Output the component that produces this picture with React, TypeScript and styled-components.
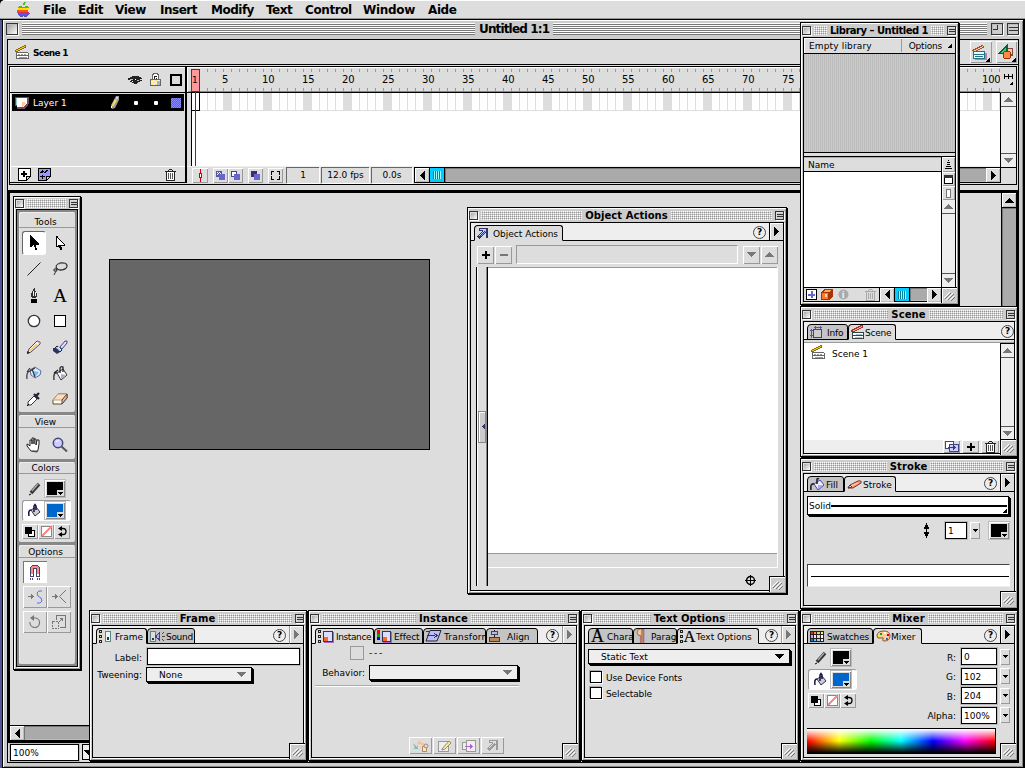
import React from 'react';

import styled, { createGlobalStyle, css } from 'styled-components';

const GlobalStyle = createGlobalStyle`
  * { box-sizing: border-box; }
  body {
    margin: 0;
    overflow: hidden;
    background: #000;
    color: #000;
    font: 9px/12px 'DejaVu Sans', Verdana, sans-serif;
  }
  svg { display: block; flex: none; overflow: visible; shape-rendering: crispEdges; }
`;

const raised = css`
  background: #ddd;
  box-shadow: inset 1px 1px 0 #fff, inset -1px -1px 0 #999;
`;

type TextProps = { $ls?: number; $w?: number; $top?: number; $right?: boolean; $bold?: boolean; $white?: boolean };

const Text = styled.span<TextProps>`
  display: block;
  flex: none;
  padding-top: ${p => p.$top ?? 2}px;
  line-height: 10px;
  white-space: pre;
  letter-spacing: ${p => p.$ls ?? 0}px;
  width: ${p => (p.$w ? `${p.$w}px` : 'auto')};
  text-align: ${p => (p.$right ? 'right' : 'left')};
  font-weight: ${p => (p.$bold ? 'bold' : 'normal')};
  color: ${p => (p.$white ? '#fff' : '#000')};
`;

const Spacer = styled.div<{ $w?: number; $h?: number }>`
  flex: ${p => (p.$w || p.$h ? 'none' : '1')};
  width: ${p => (p.$w ? `${p.$w}px` : 'auto')};
  height: ${p => (p.$h ? `${p.$h}px` : 'auto')};
`;

const Row = styled.div<{ $gap?: number; $pad?: string; $h?: number }>`
  display: flex;
  flex: none;
  align-items: center;
  gap: ${p => p.$gap ?? 0}px;
  padding: ${p => p.$pad ?? '0'};
  height: ${p => (p.$h ? `${p.$h}px` : 'auto')};
`;

/* ---------- icons ---------- */

const icons: Record<string, [number, number, React.ReactNode]> = {
  clapper: [14, 15, (
    <>
      <path d="M1 8h12v6H2z" fill="#fff" />
      <path d="M1 7.5h12M1 10.5h12M2 13.5h12M1.5 7v7M13.5 8v6" stroke="#666" />
      <path d="M3 9h2M6 9h2M9 9h2M4 12h8" stroke="#999" />
      <path d="M0 5h1V4h2V3h2V2h2V1h2V0h2v3H9v1H7v1H5v1H3v1H0z" fill="#876a20" />
      <path d="M1 5h2V4h2V3h2V2h2V1h1v1H9v1H7v1H5v1H3v1H1z" fill="#fc0" />
    </>
  )],
  clapperRed: [13, 14, (
    <>
      <path d="M0 5h1V4h2V3h2V2h2V1h2V0h3v3h-2v1H8v1H6v1H4v1H0z" fill="#a33" />
      <path d="M2 5h2V4h2V3h2V2h2V1h1v1h-1v1H8v1H6v1H4v1H2z" fill="#fa8" />
      <path d="M1 8h12v6H1z" fill="#fff" />
      <path d="M1 7.5h12M1 10.5h12M1 13.5h12M1.5 7v7M12.5 7v7" stroke="#344" />
      <path d="M5 9h6M4 12h7" stroke="#9cc" />
    </>
  )],
  clapperBlue: [16, 16, (
    <>
      <path d="M0 6h1V5h2V4h2V3h2V2h2V1h2v1h1v2h-2v1H8v1H6v1H4v1H1z" fill="#a64a50" />
      <path d="M2 6h2V5h2V4h2V3h2V2h1v1h-1v1H8v1H6v1H4v1H2z" fill="#fd6" />
      <path d="M3 9h12v7H3z" fill="#a5a" opacity=".7" />
      <path d="M2 8h11v6H2z" fill="#dff" />
      <path d="M1 7.5h12M1 10.5h12M1 14.5h12M1.5 8v6M12.500 8v6" stroke="#267388" />
      <path d="M3 12.500h8" stroke="#267388" />
    </>
  )],
  symbols: [16, 16, (
    <>
      <path d="M9 4h6v8H9z" fill="#844" />
      <path d="M10 5h4v5h-4z" fill="#fc9" />
      <path d="M0 9h1V8h1V7h1V6h1V5h1V4h1V3h1V2h1V1h1V0h1v10H0z" fill="#063" />
      <path d="M3 8h1V7h1V6h1V5h1V4h1v5H3z" fill="#3c7" />
      <circle cx="9" cy="11" r="4.5" fill="#930" />
      <circle cx="9" cy="11" r="3.5" fill="#f84" />
    </>
  )],
  eye: [14, 10, (
    <>
      <path d="M0 3h2V2h2V1h7v1h2v1h1v1h-2v1h2v1h-2v1h-2v1H9v1H6V8H4V7H2V6h1V5H0z" fill="#222" />
      <path d="M2 4h3v1H2zM9 5h2v1H9z" fill="#bbb" />
      <path d="M4 6h1v1H4zM7 4h1v1H7z" fill="#fff" />
    </>
  )],
  lock: [11, 13, (
    <>
      <path d="M2 1h1V0h5v1h1v5h2v7H0V6h2z" fill="#666" />
      <path d="M3 2h1V1h3v1h1v4H3z" fill="#fff" />
      <path d="M4 3h3v1H5v2H4zM6 5h1v1H6z" fill="#222" />
      <path d="M1 7h9v5H1z" fill="#eee" />
      <path d="M1 7h2v1H1zm4 0h2v1H5zM3 9h2v1H3zM1 11h2v1H1zm4 0h2v1H5z" fill="#fd6" />
      <path d="M7 8h3v4H7z" fill="#aad" />
    </>
  )],
  layer: [14, 12, (
    <>
      <path d="M0 0h14v7h-1v2h-1v1h-1v1h-1v1H2V9H0z" fill="#746" />
      <path d="M1 1h11v6l-4 3H2V8H1z" fill="#fff" />
      <path d="M7 10V5l5 1z" fill="#fc9" />
      <path d="M1 1h1v7H1z" fill="#9cc" />
    </>
  )],
  layerPencil: [10, 13, (
    <g shapeRendering="auto">
      <path d="M6 0h3v4L5 12l-3 1-1-4z" fill="#999" />
      <path d="M5 3l2 1-4 7-1-2z" fill="#fd5" />
      <path d="M6 1h2v2H6z" fill="#ccf" />
      <path d="M1 10h1v2H1z" fill="#fff" />
    </g>
  )],
  addLayer: [13, 13, (
    <>
      <path d="M1 1h11v8H9v3H1z" fill="#fff" />
      <path d="M0 0h13v9h-1v1h-1v1h-1v1H9v1H0zM1 1v11h7V8h4V1zM9 9v2h1v-1h1V9z" fillRule="evenodd" />
      <path d="M5 3h2v2h2v2H7v2H5V7H3V5h2z" />
    </>
  )],
  addGuide: [13, 13, (
    <>
      <path d="M1 1h11v8H9v3H1z" fill="#99f" />
      <path d="M0 0h13v9h-1v1h-1v1h-1v1H9v1H0zM1 1v11h7V8h4V1zM9 9v2h1v-1h1V9z" fillRule="evenodd" />
      <path d="M2 4h1V3h1V2h1v1h1v1h1V3h1V2h2v1H9v1H8v1H6V4H5v1H2zM4 7h1v1h2v1H5v2H4V9H2V8h2z" />
    </>
  )],
  trash: [11, 12, (
    <>
      <path d="M2 3h7v8H2z" fill="#fff" />
      <path d="M4 0h3v1h1v1h3v1h-1v9H1V3H0V2h3V1h1zM4 1v1h3V1zM2 3v8h7V3z" fillRule="evenodd" fill="#222" />
      <path d="M3 4h1v6H3zm2 0h1v6H5zm2 0h1v6H7z" fill="#555" />
    </>
  )],
  trashGray: [11, 12, (
    <>
      <path d="M4 0h3v1h1v1h3v1h-1v9H1V3H0V2h3V1h1zM4 1v1h3V1zM2 3v8h7V3z" fillRule="evenodd" fill="#aaa" />
      <path d="M3 4h1v6H3zm2 0h1v6H5zm2 0h1v6H7z" fill="#aaa" />
    </>
  )],
  playhead: [5, 13, (
    <>
      <path d="M2 0h1v4h1v5H3v4H2V9H1V4h1z" fill="#c00" />
      <path d="M2 5h1v3H2z" fill="#fff" />
    </>
  )],
  onion: [9, 9, (
    <>
      <path d="M0 0h6v6H0z" fill="#559" />
      <path d="M1 1h1v1H1zm2 0h1v1H3zM2 2h1v1H2zm2 0h1v1H4zM1 3h1v1H1zm2 0h1v1H3z" fill="#fff" />
      <path d="M3 3h6v6H3z" fill="#66c" />
    </>
  )],
  onionLines: [9, 9, (
    <>
      <path d="M0 0h6v6H0z" fill="#448" />
      <path d="M1 1h4v4H1z" fill="#fff" />
      <path d="M3 3h6v6H3z" fill="#66c" />
    </>
  )],
  onionMulti: [9, 9, (
    <>
      <path d="M0 0h6v6H0z" fill="#336" />
      <path d="M3 3h6v6H3z" fill="#66c" />
    </>
  )],
  markers: [9, 9, <path d="M0 0h3v1H1v2H0zM6 0h3v3H8V1H6zM0 6h1v2h2v1H0zM8 6h1v3H6V8h2zM0 3h1v1H0zM8 3h1v1H8zM0 5h1v1H0zM8 5h1v1H8z" />],
  frameView: [9, 13, <path d="M0 0h1v2h3V0h1v2h3V0h1v5H8V3H5v2H4V3H1v2H0zM9 8v3H6v-1h1V9h1V8z" />],
  arrow: [10, 16, <path d="M1 0v12h2v-1h1v-1h1v2h1v3h2v-2H7v-3h3V8H9V7H8V6H7V5H6V4H5V3H4V2H3V1H2V0z" />],
  subselect: [9, 14, (
    <path d="M.5.5v10h2v-1h1v2h1v2h1v-2h-1v-2h4v-1l-7-7v-1z" fill="#fff" stroke="#000" />
  )],
  line: [14, 14, <path d="M13.500.5L.5 13.500" stroke="#222" shapeRendering="auto" />],
  lasso: [15, 14, (
    <g shapeRendering="auto" fill="none" stroke="#333">
      <ellipse cx="8.500" cy="4.500" rx="5.500" ry="3.500" transform="rotate(-10 8 4)" strokeWidth="1.300" />
      <path d="M3 6l1 3H1V7h4M3 9l-2 4" />
      <path d="M6 2q3-2 6-.5" stroke="#66a" />
    </g>
  )],
  pen: [8, 15, (
    <>
      <path d="M4 0h1v3h1v2h1v4H6v1H2V9H1V5h1V3h1V1h1z" fill="#333" />
      <path d="M3 3h1v5H3zM5 4h1v4H5z" fill="#eee" />
      <path d="M4 1h1v1H4z" fill="#60c" />
      <path d="M1 11h6v4H1z" fill="#000" />
    </>
  )],
  letterA: [16, 14, <text x="1" y="13.500" fontFamily="Liberation Serif, serif" fontSize="19.500">A</text>],
  oval: [14, 14, <circle cx="7" cy="7" r="5.700" fill="#fff" stroke="#334" strokeWidth="1.300" shapeRendering="auto" />],
  rect: [12, 12, <path d="M.5.5h11v11H.5z" fill="#fff" stroke="#000" />],
  pencil: [14, 14, (
    <g shapeRendering="auto">
      <path d="M1 13l1-4L10 1l3 1v2L4 12z" fill="#fff" stroke="#446" />
      <path d="M3 11l7-7" stroke="#fc6" strokeWidth="2" />
      <path d="M10 1l3 1v2l-2-1z" fill="#d99" />
      <path d="M0 14v-3l3 2z" fill="#222" />
    </g>
  )],
  brush: [15, 14, (
    <g shapeRendering="auto">
      <path d="M7 7l5-6h2v2L9 9z" fill="#ddf" stroke="#447" />
      <path d="M4 6l5 4-2 2-5-4z" fill="#9cf" stroke="#224" />
      <path d="M0 8h3l4 4-3 2-4-3z" fill="#335" />
      <path d="M5 7l3 3" stroke="#fff" />
    </g>
  )],
  ink: [16, 14, (
    <g shapeRendering="auto">
      <path d="M4 4l5-3 6 4-1 4-5 3-4-3z" fill="#def" stroke="#669" />
      <path d="M7 5l6 1-2 3-3 2z" fill="#7bf" />
      <path d="M9 2L4 5Q0 6 1 13M4 2L1 6M6 3l3 8" fill="none" stroke="#333" strokeWidth="1.200" />
    </g>
  )],
  bucket: [15, 15, (
    <g shapeRendering="auto">
      <path d="M4 7l6-4 4 6-6 5z" fill="#fff" stroke="#333" />
      <path d="M8 8l5 1-5 4z" fill="#aac" />
      <path d="M7 7V2q1-2 3-1v5M4 7Q0 6 1 14M1 7l4-3" fill="none" stroke="#222" strokeWidth="1.300" />
    </g>
  )],
  bucketTab: [15, 13, (
    <g shapeRendering="auto">
      <path d="M4 6l6-4 4 5-6 5z" fill="#eef" stroke="#44a" />
      <path d="M8 7l5 0-5 4z" fill="#aae" />
      <path d="M7 6V1q1-1 2 0M4 6Q0 5 1 12" fill="none" stroke="#222" strokeWidth="1.600" />
    </g>
  )],
  bucketDark: [13, 13, (
    <g shapeRendering="auto">
      <path d="M3 6l5-3 4 5-5 4z" fill="#ccd" stroke="#333" />
      <path d="M6 8V2l1-1.500L8 2v4M3 6Q0 6 1 12" fill="none" stroke="#114" strokeWidth="1.500" />
    </g>
  )],
  dropper: [14, 14, (
    <g shapeRendering="auto">
      <path d="M1 13v-3l6-6 3 3-6 6z" fill="#fff" stroke="#334" />
      <path d="M7 2l5 5M9 4l3-3" stroke="#223" strokeWidth="2.300" />
      <path d="M0 14l2-2" stroke="#000" />
    </g>
  )],
  eraser: [16, 14, (
    <g shapeRendering="auto">
      <path d="M1 8l5-6h9v4l-5 6H1z" fill="#ffe" stroke="#643" />
      <path d="M1 8h9l5-6H6z" fill="#fdb" stroke="#b98" />
      <path d="M10 8v4l5-6V2z" fill="#dba" stroke="#643" />
    </g>
  )],
  hand: [16, 16, (
    <g shapeRendering="auto">
      <path d="M5 14L1 9V7l2 1 1 1V3h2v4V1h2v6-5h2v6l1-5h2v4l-1 6-1 2z" fill="#fff" stroke="#222" />
      <path d="M6 14h6" stroke="#555" />
    </g>
  )],
  magnifier: [16, 15, (
    <g shapeRendering="auto">
      <circle cx="6" cy="6" r="4.700" fill="#ccf" stroke="#447" strokeWidth="1.500" />
      <path d="M4 5q1-2 3-1" stroke="#fff" fill="none" />
      <path d="M9.500 9.500l5.500 5" stroke="#555" strokeWidth="2" />
    </g>
  )],
  stylus: [13, 13, (
    <g shapeRendering="auto">
      <path d="M2 11l8-9" stroke="#333" strokeWidth="3.500" />
      <path d="M3 9l6-7" stroke="#aaa" strokeWidth="1.300" />
      <path d="M0 13l2-1" stroke="#000" />
    </g>
  )],
  magnet: [12, 15, (
    <>
      <path d="M1 12V2h1V1h1V0h6v1h1v1h1v10H7V4H5v8z" fill="#446" />
      <path d="M2 9V2h1V1h6v1h1v7H8V3H4v6z" fill="#f88" />
      <path d="M2 9h2v2H2zM8 9h2v2H8z" fill="#fff" />
      <path d="M1 13h1v2H1zm2 0h1v2H3zm5 0h1v2H8zm2 0h1v2h-1z" fill="#448" />
    </>
  )],
  smooth: [15, 15, (
    <>
      <path d="M0 6h3V4h1v1h1v1h1v1H5v1H4v1H3V7H0z" fill="#777" />
      <path d="M14 1h-3l-2 2 1 3 3 2 1 3-2 2H9" fill="none" stroke="#66e" shapeRendering="auto" />
    </>
  )],
  straighten: [15, 15, (
    <>
      <path d="M0 6h3V4h1v1h1v1h1v1H5v1H4v1H3V7H0z" fill="#777" />
      <path d="M14 0L7.500 6.500 14 13" fill="none" stroke="#66e" shapeRendering="auto" />
    </>
  )],
  rotate: [14, 14, (
    <g shapeRendering="auto">
      <path d="M5 3h3a4.800 4.800 0 11-6 4" fill="none" stroke="#777" strokeWidth="1.200" />
      <path d="M6 0v6L2 3z" fill="#777" />
    </g>
  )],
  scale: [14, 14, (
    <>
      <path d="M.5 6.500h6v7h-6z" fill="none" stroke="#777" strokeDasharray="2 1" />
      <path d="M4.500 5V.5h9v12H8M6 8l4-4M8 3.500h2.500V6" fill="none" stroke="#777" />
    </>
  )],
  defaults: [10, 10, (
    <>
      <path d="M3.500 3.500h6v6h-6z" fill="#fff" stroke="#000" />
      <path d="M0 0h7v7H0z" />
    </>
  )],
  noColor: [11, 11, (
    <>
      <path d="M.5.5h10v10H.5z" fill="#fff" stroke="#888" />
      <path d="M1 10l9-9" stroke="#f88" strokeWidth="1.700" />
    </>
  )],
  swap: [9, 11, (
    <g shapeRendering="auto">
      <path d="M3 2.500h2q3 0 3 3t-3 3H3" fill="none" stroke="#000" strokeWidth="1.300" />
      <path d="M4 0v5L0 2.500zM4 6v5L0 8.500z" />
    </g>
  )],
  actions: [11, 11, (
    <>
      <path d="M2 0h9v10H9V5H8v1H7v1H6v1H5v1H4v1H3v1H2v-1H1V9H0V8h1V7h1V6h1V5h1V4h1V3H2z" fill="#336" />
      <path d="M3 1h6v3H8V3H7v1H6v1H5v1H4v1H3v1H2V7h1V6h1V5h1V4h1V2H3z" fill="#bcf" />
      <path d="M5 6h1V5h1V4h1V3h1v1H8v1H7v1H6v1H5v1H4V7h1z" fill="#7af" />
    </>
  )],
  frame: [13, 13, (
    <>
      <path d="M0 0h3v3H0zm0 5h3v3H0zm0 5h3v3H0z" fill="#222" />
      <path d="M1 1h1v1H1zm0 5h1v1H1zm0 5h1v1H1z" fill="#fe6" />
      <path d="M6.500 1.500h5v10h-5z" fill="#f3f3f3" stroke="#588" />
      <path d="M8 7h2v3H8z" fill="#333" />
    </>
  )],
  sound: [15, 13, (
    <>
      <path d="M.5 1.500h5v10h-5z" fill="#ddd" stroke="#588" />
      <path d="M2 8h2v2H2z" fill="#333" />
      <path d="M5 5h2V4h1V3h1V2h1v9H9v-1H8V9H7V8H5z" fill="#447" />
      <path d="M7 5h1V4h1v4H7z" fill="#aaf" />
      <path d="M12 6h3v1h-3zM12 3h1v1h-1zM13 2h1v1h-1zM12 9h1v1h-1zM13 10h1v1h-1z" fill="#444" />
    </>
  )],
  instance: [16, 13, (
    <>
      <path d="M0 0h3v3H0zm0 5h3v3H0zm0 5h3v3H0z" fill="#222" />
      <path d="M1 1h1v1H1zm0 5h1v1H1zm0 5h1v1H1z" fill="#fe6" />
      <path d="M6 2h10v11H6z" fill="#a6b" />
      <path d="M5 1h10v11H5z" fill="#336" />
      <path d="M6 2h8v9H6z" fill="#ddf" />
      <path d="M6 7h4v4H6z" fill="#f62" />
    </>
  )],
  effect: [15, 13, (
    <>
      <path d="M0 0h3v4H0z" fill="#f00" />
      <path d="M0 4h3v3H0z" fill="#0a0" />
      <path d="M0 7h3v3H0z" fill="#00f" />
      <path d="M6 2h9v11H6z" fill="#a6b" />
      <path d="M5 1h9v11H5z" fill="#336" />
      <path d="M6 2h7v9H6z" fill="#ddf" />
      <path d="M6 7h4v4H6z" fill="#f62" />
    </>
  )],
  transform: [16, 12, (
    <>
      <path d="M4 .5h11L11 11H0z" fill="#bbf" stroke="#223" shapeRendering="auto" />
      <path d="M0 1.500h4M1 5.500h8M8 3l3 2.500L8 8" fill="none" stroke="#335" />
    </>
  )],
  align: [11, 12, (
    <>
      <path d="M5.500 0v12" stroke="#222" />
      <path d="M2.500 1.500h6v3h-6z" fill="#bbe" stroke="#446" />
      <path d="M.5 7.500h10v4H.5z" fill="#b85" stroke="#532" />
    </>
  )],
  textA: [14, 12, <text x="0" y="11.500" fontFamily="Liberation Serif, serif" fontSize="18" stroke="#000" strokeWidth=".2">A</text>],
  paragraph: [11, 13, (
    <text x="0" y="11" fontFamily="DejaVu Sans, sans-serif" fontSize="15" fill="#fc9" stroke="#955" strokeWidth=".7">¶</text>
  )],
  textOptions: [15, 13, (
    <>
      <path d="M0 0h3v3H0zm0 5h3v3H0zm0 5h3v3H0z" fill="#222" />
      <path d="M1 1h1v1H1zm0 5h1v1H1zm0 5h1v1H1z" fill="#fe0" />
      <text x="3.500" y="12" fontFamily="Liberation Serif, serif" fontSize="16.500" stroke="#000" strokeWidth=".2">A</text>
    </>
  )],
  info: [12, 12, (
    <>
      <path d="M3.500 3.500h8v8h-8z" fill="#ccc" stroke="#446" />
      <path d="M1.500 3v9M4 1.500h8M0 4.500h3M0 9.500h3M5.500 0v3M10.500 0v3" stroke="#55a" />
    </>
  )],
  strokeTab: [15, 9, (
    <g shapeRendering="auto">
      <path d="M1 8l2-3 8-4q4-1 3 2L6 8z" fill="#f96" stroke="#733" />
      <path d="M3 6l8-3" stroke="#fdb" />
      <path d="M1 8l2-3 2 2z" fill="#fff" stroke="#433" />
    </g>
  )],
  swatches: [14, 11, (
    <>
      <path d="M0 0h14v11H0z" fill="#222" />
      <path d="M1 1h2v2H1z" fill="#c33" /><path d="M4 1h2v2H4z" fill="#f93" /><path d="M7 1h3v2H7z" fill="#fc3" /><path d="M11 1h2v2h-2z" fill="#fe6" />
      <path d="M1 4h2v3H1z" fill="#c9f" /><path d="M4 4h2v3H4z" fill="#eee" /><path d="M7 4h3v3H7z" fill="#fcc" /><path d="M11 4h2v3h-2z" fill="#fff" />
      <path d="M1 8h2v2H1z" fill="#36c" /><path d="M4 8h2v2H4z" fill="#6cf" /><path d="M7 8h3v2H7z" fill="#9cf" /><path d="M11 8h2v2h-2z" fill="#cff" />
    </>
  )],
  palette: [15, 12, (
    <g shapeRendering="auto">
      <path d="M1 6Q1 1 8 1q6 0 6 5t-6 5q-2 0-1-2t-2-1q-4 1-4-2z" fill="#fc9" stroke="#853" />
      <path d="M4 3h2v2H4z" fill="#0a0" /><path d="M8 2h2v2H8z" fill="#fff" /><path d="M11 4h2v2h-2z" fill="#c00" />
      <path d="M10 8h2v2h-2z" fill="#36c" /><path d="M2 6h2v1H2z" fill="#fe0" />
    </g>
  )],
  plus: [8, 8, <path d="M3 0h2v3h3v2H5v3H3V5H0V3h3z" />],
  minus: [8, 8, <path d="M0 3h8v2H0z" fill="#777" />],
  duplicate: [14, 11, (
    <>
      <path d="M.5.5h8v7h-8z" fill="#fff" stroke="#447" />
      <path d="M4.500 3.500h9v7h-9z" fill="#ccf" stroke="#447" />
      <path d="M3 6h5V4h1v1h1v1h1v1h-1v1H9v1H8V7H3z" fill="#33a" />
    </>
  )],
  newSymbol: [11, 11, (
    <>
      <path d="M.5.5h10v10H.5z" fill="#fff" stroke="#000" />
      <path d="M5 2h2v3h2v2H7v2H5V7H2V5h3z" fill="#66c" />
    </>
  )],
  folder: [12, 11, (
    <>
      <path d="M0 3l4-3h8v7l-4 4H0z" fill="#a30" />
      <path d="M1 4h6v6H1z" fill="#f72" /><path d="M2 3l3-2h6L8 3z" fill="#fa5" />
      <path d="M4 5h2v3H4z" fill="#fff" opacity=".7" />
    </>
  )],
  infoGray: [11, 11, (
    <>
      <circle cx="5.500" cy="5.500" r="5" fill="#aaa" shapeRendering="auto" />
      <text x="3.800" y="9" fontFamily="Liberation Serif, serif" fontWeight="bold" fontSize="10" fill="#eee">i</text>
    </>
  )],
  sort: [7, 9, <path d="M3 0h1v1H3zM2 2h3v1H2zM2 4h3v1H2zM1 6h5v1H1zM0 8h7v1H0z" />],
  wide: [9, 9, (
    <>
      <path d="M.5.5h8v8h-8z" fill="#fff" stroke="#000" />
      <path d="M0 0h9v3H0z" fill="#333" />
    </>
  )],
  narrow: [5, 9, <path d="M.5.5h4v8h-4z" fill="#fff" stroke="#777" />],
  updown: [5, 15, <path d="M2 0h1v2h1v2h1v2H3v3h2v2H4v2H3v2H2v-2H1v-2H0V9h2V6H0V4h1V2h1z" />],
  target: [11, 11, (
    <g shapeRendering="auto">
      <circle cx="5.500" cy="5.500" r="4" fill="none" stroke="#000" strokeWidth="1.400" />
      <path d="M5.500 0v11M0 5.500h11" stroke="#000" />
    </g>
  )],
  swapSymbol: [16, 12, (
    <g shapeRendering="auto">
      <path d="M0 3l1 1 3 3V4l1 5H0l2-1z" fill="#7bb" />
      <path d="M4 3l4-3-1 2 5 2-2 2-4-3v2z" fill="#fb8" />
      <path d="M9.500 6.500h4v5h-4z" fill="#fea" stroke="#a86" /><circle cx="13" cy="6" r="2" fill="#ddd" stroke="#a88" />
    </g>
  )],
  editSymbol: [14, 12, (
    <>
      <path d="M.5 1.500h10v10H.5z" fill="#eee" stroke="#999" />
      <path d="M4 9l7-8 2 2-6 6-3 1z" fill="#fe8" stroke="#888" shapeRendering="auto" />
    </>
  )],
  dupSymbol: [14, 12, (
    <>
      <path d="M.5 2.500h7v7h-7z" fill="#eee" stroke="#999" />
      <path d="M4.500.5h9v11h-9z" fill="#eee" stroke="#999" />
      <path d="M3 6h5V4h1v1h1v1h1v1h-1v1H9v1H8V7H3z" fill="#a6c" />
    </>
  )],
  actionsGray: [11, 11, (
    <>
      <path d="M2 0h9v10H9V5H8v1H7v1H6v1H5v1H4v1H3v1H2v-1H1V9H0V8h1V7h1V6h1V5h1V4h1V3H2z" fill="#999" />
      <path d="M3 1h6v3H8V3H7v1H6v1H5v1H4v1H3v1H2V7h1V6h1V5h1V4h1V2H3z" fill="#dde" />
    </>
  )],
};

const Icon = ({ name }: { name: string }) => {
  const [w, h, drawing] = icons[name];
  return (
    <svg width={w} height={h} viewBox={`0 0 ${w} ${h}`}>
      {drawing}
    </svg>
  );
};

const trianglePaths = {
  left: 'M5 0v9H4V8H3V7H2V6H1V5H0V4h1V3h1V2h1V1h1V0z',
  right: 'M0 0v9h1V8h1V7h1V6h1V5h1V4H4V3H3V2H2V1H1V0z',
  up: 'M0 5h9V4H8V3H7V2H6V1H5V0H4v1H3v1H2v1H1v1H0z',
  down: 'M0 0h9v1H8v1H7v1H6v1H5v1H4V4H3V3H2V2H1V1H0z',
};

const Triangle = ({ dir, gray }: { dir: keyof typeof trianglePaths; gray?: boolean }) => {
  const tall = dir === 'left' || dir === 'right';
  return (
    <svg width={tall ? 5 : 9} height={tall ? 9 : 5}>
      <path d={trianglePaths[dir]} fill={gray ? '#777' : '#000'} />
    </svg>
  );
};

const SmallTriangle = () => (
  <svg width="5" height="3">
    <path d="M0 0h5v1H4v1H3v1H2V2H1V1H0z" />
  </svg>
);

const Corner = () => (
  <svg width="4" height="4">
    <path d="M4 0v4H0V3h1V2h1V1h1V0z" />
  </svg>
);

const ButtonCorner = styled.span`
  align-self: flex-end;
  margin: 0 0 1px -2px;
`;

/* ---------- shared controls ---------- */

const Button = styled.div<{ $w: number; $h: number; $on?: boolean }>`
  ${raised}
  display: flex;
  flex: none;
  align-items: center;
  justify-content: center;
  width: ${p => p.$w}px;
  height: ${p => p.$h}px;
  ${p => p.$on && 'background: #fff; box-shadow: inset 1px 1px 0 #777, inset -1px -1px 0 #fff;'}
`;

const Input = styled.div<{ $w: number; $h?: number }>`
  flex: none;
  width: ${p => p.$w}px;
  height: ${p => p.$h ?? 17}px;
  padding: 1px 2px 0;
  border: 1px solid #000;
  background: #fff;
  box-shadow: 0 0 0 1px #bbb;
  line-height: 14px;
`;

const Select = styled.div<{ $w: number }>`
  display: flex;
  flex: none;
  align-items: center;
  justify-content: space-between;
  width: ${p => p.$w}px;
  height: 15px;
  padding: 0 5px 0 12px;
  border: 1px solid #000;
  background: #eee;
  box-shadow: 1px 1px 0 #000, 2px 2px 0 #000;
`;

const Checkbox = styled.div`
  width: 12px;
  height: 12px;
  border: 1px solid #000;
  background: #fff;
  box-shadow: -1px -1px 0 #aaa, 1px 1px 0 #fff;
`;

const SwatchBox = styled.div<{ $color: string }>`
  display: flex;
  flex: none;
  align-items: flex-end;
  justify-content: flex-end;
  width: 20px;
  height: 17px;
  padding: 1px 1px 1px;
  background: linear-gradient(${p => p.$color}, ${p => p.$color}) 2px 2px / 16px 13px no-repeat, #ddd;
  box-shadow: inset 1px 1px 0 #fff, inset -1px -1px 0 #888, 0 0 0 1px #bbb;
`;

const SwatchArrow = styled.div`
  padding: 2px 1px 1px 1px;
  background: #ddd;
`;

const Swatch = ({ color }: { color: string }) => (
  <SwatchBox $color={color}>
    <SwatchArrow>
      <SmallTriangle />
    </SwatchArrow>
  </SwatchBox>
);

const Colors = styled.div`
  display: flex;
  flex: none;
  flex-direction: column;
  width: 49px;
`;

const FillRow = styled.div`
  display: flex;
  align-items: center;
  height: 21px;
  margin: 2px 0 3px;
  padding: 0 5px;
  justify-content: space-between;
  border: 1px solid #999;
  border-color: #999 #fff #fff #999;
  border-radius: 3px;
  background: #fff;
`;

const ColorPicker = () => (
  <Colors>
    <Row $h={19} $pad="0 6px 0 7px">
      <Icon name="stylus" />
      <Spacer />
      <Swatch color="#000" />
    </Row>
    <FillRow>
      <Icon name="bucketDark" />
      <Swatch color="#06c" />
    </FillRow>
    <Row>
      <Button $w={16} $h={15}><Icon name="defaults" /></Button>
      <Button $w={16} $h={15}><Icon name="noColor" /></Button>
      <Button $w={16} $h={15}><Icon name="swap" /></Button>
    </Row>
  </Colors>
);

const ScrollCell = styled.div<{ $off?: boolean }>`
  display: flex;
  flex: none;
  align-items: center;
  justify-content: center;
  width: 14px;
  height: 14px;
  background: ${p => (p.$off ? '#eee' : '#ddd')};
  ${p => !p.$off && 'box-shadow: inset 1px 1px 0 #fff, inset -1px -1px 0 #bbb;'}
`;

const VScroll = styled.div<{ $w: number }>`
  display: flex;
  flex: 1;
  flex-direction: column;
  align-items: center;
  justify-content: space-between;
  width: ${p => p.$w}px;
  background: #eee;

  > :first-child { border-bottom: 1px solid #555; }
  > :last-child { border-top: 1px solid #555; }
  > * { width: 100%; }
`;

const OffScroll = ({ w }: { w: number }) => (
  <VScroll $w={w}>
    <ScrollCell $off><Triangle dir="up" gray /></ScrollCell>
    <ScrollCell $off><Triangle dir="down" gray /></ScrollCell>
  </VScroll>
);

const Thumb = styled.div`
  flex: none;
  width: 16px;
  height: 100%;
  border: solid #000;
  border-width: 0 1px;
  background: repeating-linear-gradient(90deg, #067a99 0 1px, #9ff 1px 2px) 3px 3px / 8px 8px no-repeat, #0cf;
`;

const Track = styled.div`
  flex: 1;
  height: 100%;
  background: #aaa;
  box-shadow: inset 1px 1px 0 #777, inset 0 -1px 0 #bbb;
`;

/* ---------- floating windows ---------- */

const Frame = styled.section<{ $x: number; $y: number; $w: number; $h: number }>`
  position: absolute;
  left: ${p => p.$x}px;
  top: ${p => p.$y}px;
  display: flex;
  flex-direction: column;
  width: ${p => p.$w}px;
  height: ${p => p.$h}px;
  padding: 0 2px 2px;
  border: 1px solid #000;
  background: #ccc;
  box-shadow: 1px 1px 0 #000, inset 1px 1px 0 #fff, inset -1px -1px 0 #999;
`;

const TitleBar = styled.div<{ $small?: boolean }>`
  display: flex;
  flex: none;
  align-items: center;
  gap: 3px;
  height: ${p => (p.$small ? 12 : 14)}px;
  margin: 0 0 0 -1px;
`;

const Dots = styled.div`
  flex: 1;
  height: 9px;
  background: conic-gradient(#ccc 25%, #999 0 50%, #ccc 0 75%, #fff 0) 0 0 / 2px 2px;
`;

const Title = styled.h2<{ $ls?: number }>`
  margin: 0;
  font-size: 10px;
  line-height: 13px;
  font-weight: bold;
  letter-spacing: ${p => p.$ls ?? 0.1}px;
  white-space: pre;
`;

const CloseBox = styled.div`
  width: 9px;
  height: 9px;
  border: 1px solid #333;
  background: linear-gradient(135deg, #999, #fff);
  box-shadow: inset 1px 1px 0 #ddd, 1px 1px 0 #fff;
`;

const CollapseBox = styled(CloseBox)`
  background: linear-gradient(#333, #333) 0 2px / 100% 1px no-repeat, linear-gradient(#333, #333) 0 4px / 100% 1px no-repeat, #ccc;
`;

const Body = styled.div`
  display: flex;
  flex: 1;
  flex-direction: column;
  min-height: 0;
  border: 1px solid #000;
  background: #ddd;
  box-shadow: 1px 1px 0 #fff;
`;

const Grip = styled.div`
  position: absolute;
  right: 1px;
  bottom: 1px;
  width: 16px;
  height: 16px;
  padding: 3px 0 0 2px;
  border: solid #000;
  border-width: 1px 0 0 1px;
  background: #ccc;
  box-shadow: inset 1px 1px 0 #fff;
`;

type WindowProps = {
  x: number;
  y: number;
  w: number;
  h: number;
  title?: string;
  ls?: number;
  grip?: boolean;
  children: React.ReactNode;
};

const Window = ({ x, y, w, h, title, ls, grip = true, children }: WindowProps) => (
  <Frame $x={x} $y={y} $w={w} $h={h}>
    <TitleBar $small={!title}>
      <CloseBox />
      <Dots />
      {title && <Title $ls={ls}>{title}</Title>}
      {title && <Dots />}
      <CollapseBox />
    </TitleBar>
    <Body>{children}</Body>
    {grip && (
      <Grip>
        <svg width="11" height="10">
          <path d="M0 7l6-6M2 9l7-7M6 9l4-4" stroke="#fff" />
          <path d="M1 8l6-6M4 9l6-6M7 10l4-4" stroke="#777" />
        </svg>
      </Grip>
    )}
  </Frame>
);

const TabStrip = styled.div`
  display: flex;
  flex: none;
  align-items: flex-end;
  height: 18px;
  background: linear-gradient(#000, #000) 0 17px / 100% 1px no-repeat, #eee;
`;

const Tab = styled.div<{ $w: number; $on?: boolean; $gap?: number }>`
  display: flex;
  flex: none;
  align-items: center;
  gap: ${p => p.$gap ?? 2}px;
  overflow: hidden;
  width: ${p => p.$w}px;
  height: 16px;
  padding-left: 2px;
  border: 1px solid #000;
  border-bottom-color: ${p => (p.$on ? '#ddd' : '#000')};
  border-radius: 4px 3px 0 0;
  background: ${p => (p.$on ? '#ddd' : '#c4c4c4')};
`;

const Help = styled.div<{ $end?: boolean }>`
  width: 13px;
  height: 13px;
  margin: 0 ${p => (p.$end ? 0 : 3)}px 2px 0;
  border: 1px solid #444;
  border-radius: 50%;
  font-weight: bold;
  font-size: 9px;
  line-height: 11px;
  text-align: center;
`;

const MenuCell = styled.div<{ $off?: boolean }>`
  display: flex;
  align-items: center;
  justify-content: center;
  width: 14px;
  height: 18px;
  border-left: 1px solid ${p => (p.$off ? '#999' : '#000')};
  border-bottom: 1px solid #000;
  background: #ddd;
  box-shadow: inset 1px 1px 0 #fff;
`;

type TabItem = { icon: string; label: string; w: number; on?: boolean; ls?: number; gap?: number };

const Tabs = ({ items, menu, indent = 3 }: { items: TabItem[]; menu?: 'on' | 'off'; indent?: number }) => (
  <TabStrip>
    <Spacer $w={indent} />
    {items.map(t => (
      <Tab key={t.label} $w={t.w} $on={t.on} $gap={t.gap}>
        <Icon name={t.icon} />
        <Text $ls={t.ls}>{t.label}</Text>
      </Tab>
    ))}
    <Spacer />
    <Help $end={!menu}>?</Help>
    {menu && (
      <MenuCell $off={menu === 'off'}>
        <Triangle dir="right" gray={menu === 'off'} />
      </MenuCell>
    )}
  </TabStrip>
);

/* ---------- menu bar ---------- */

const MenuBar = styled.nav`
  position: absolute;
  inset: 0 0 auto;
  display: flex;
  align-items: center;
  height: 20px;
  padding: 0 0 1px 17px;
  border-top: 1px solid #fff;
  border-bottom: 1px solid #000;
  border-radius: 5px 0 0 0;
  background: #ddd;
  box-shadow: inset 0 -1px 0 #999;
  font-size: 12px;
`;

const menus: [string, number, number][] = [
  ['File', 35, -0.4],
  ['Edit', 37, -0.4],
  ['View', 45, -0.4],
  ['Insert', 51, -0.5],
  ['Modify', 55, -0.5],
  ['Text', 39, -0.5],
  ['Control', 58, -0.4],
  ['Window', 65, -0.3],
  ['Aide', 40, -0.4],
];

const AppleLogo = () => (
  <svg width="13" height="15" viewBox="0 0 13 15">
    <path d="M6 3V1h1V0h2v1H8v2z" fill="#4b3" />
    <path d="M2 4h3v1h3V4h3v1h1v1H1V5h1z" fill="#4b3" />
    <path d="M1 6h11v1h-1v1H0V7h1z" fill="#fd0" />
    <path d="M0 8h11v2H0z" fill="#f50" />
    <path d="M0 10h12v1h1v1H1v-1H0z" fill="#d3305a" />
    <path d="M1 12h11v1h-1v1H2v-1H1z" fill="#55e" />
    <path d="M3 14h7v1H7v-1H6v1H3z" fill="#559" />
  </svg>
);

/* ---------- document window ---------- */

const Document = styled.main`
  position: absolute;
  left: 2px;
  top: 19px;
  display: flex;
  flex-direction: column;
  width: 1022px;
  height: 749px;
  padding: 0 4px 4px;
  border: 1px solid #000;
  background: #ccc;
  box-shadow: inset 1px 1px 0 #fff, inset -1px -1px 0 #888, -2px 0 0 #56569a;
`;

const DocTitle = styled.header`
  display: flex;
  flex: none;
  align-items: center;
  gap: 4px;
  height: 19px;
  margin-left: -1px;
  padding-bottom: 2px;
`;

const DocName = styled.h1`
  flex: none;
  margin: 0;
  font-size: 12px;
  line-height: 14px;
  letter-spacing: -0.85px;
`;

const Stripes = styled.div<{ $w?: number }>`
  flex: ${p => (p.$w ? 'none' : '1')};
  width: ${p => p.$w ?? 0}px;
  height: 12px;
  background: repeating-linear-gradient(#fff 0 1px, #777 1px 2px);
`;

const DocBox = styled.div`
  width: 12px;
  height: 12px;
  border: 1px solid #333;
  background: linear-gradient(135deg, #999, #fff);
  box-shadow: inset 1px 1px 0 #bbb, 1px 1px 0 #fff;
`;

const ZoomBox = styled(DocBox)`
  background: linear-gradient(#333, #333) 5px 0 / 1px 6px no-repeat, linear-gradient(#333, #333) 0 5px / 6px 1px no-repeat, #ccc;
`;

const ShadeBox = styled(DocBox)`
  background: linear-gradient(#333, #333) 0 3px / 100% 1px no-repeat, linear-gradient(#333, #333) 0 6px / 100% 1px no-repeat, #ccc;
`;

const DocBody = styled.div`
  display: flex;
  flex: 1;
  flex-direction: column;
  border: 1px solid #000;
  background: #ddd;
`;

const SceneBar = styled.div`
  display: flex;
  flex: none;
  align-items: center;
  gap: 4px;
  height: 25px;
  padding: 0 1px 0 7px;
  border-bottom: 1px solid #000;
`;

const Timeline = styled.div`
  display: flex;
  flex: none;
  height: 119px;
  margin: 1px 1px 5px;
  border: 1px solid #000;
`;

const Layers = styled.div`
  display: flex;
  flex: none;
  flex-direction: column;
  width: 177px;
  margin-bottom: 1px;
  border-right: 2px solid #000;
  border-bottom: 1px solid #000;
  box-shadow: inset 1px 1px 0 #fff;
`;

const LayersHead = styled.div`
  display: flex;
  align-items: center;
  justify-content: flex-end;
  gap: 8px;
  height: 26px;
  padding-right: 3px;
  border-bottom: 1px solid #000;
`;

const OutlineBox = styled.div`
  width: 12px;
  height: 12px;
  margin-left: 1px;
  border: 2px solid #000;
`;

const LayerRow = styled.div`
  display: flex;
  align-items: center;
  height: 17px;
  margin: 1px 1px 0 2px;
  padding: 0 4px 0 3px;
  background: #000;
`;

const Dot = styled.div<{ $last?: boolean }>`
  width: 4px;
  height: 4px;
  margin-right: ${p => (p.$last ? 13 : 16)}px;
  border-radius: 1px;
  background: #fff;
`;

const LayerColor = styled.div`
  width: 10px;
  height: 10px;
  margin-right: -1px;
  background: conic-gradient(#88f 25%, #56d 0 50%, #88f 0 75%, #56d 0) 0 0 / 2px 2px;
`;

const LayersFoot = styled.div`
  display: flex;
  align-items: center;
  gap: 7px;
  height: 16px;
  margin-top: auto;
  padding: 0 9px 0 8px;
  border-top: 1px solid #fff;
`;

const Frames = styled.div`
  display: flex;
  flex: none;
  flex-direction: column;
  width: 813px;
`;

const Ruler = styled.div`
  position: relative;
  display: flex;
  flex: none;
  overflow: hidden;
  height: 26px;
  padding: 7px 0 0 35px;
  border-bottom: 1px solid #000;
  background:
    repeating-linear-gradient(90deg, transparent 0 4px, #999 4px 5px, transparent 5px 8px) 0 2px / 100% 3px no-repeat,
    repeating-linear-gradient(90deg, transparent 0 4px, #999 4px 5px, transparent 5px 8px) 0 21px / 100% 3px no-repeat,
    linear-gradient(#888, #888) 0 24px / 100% 1px no-repeat,
    #ddd;
  box-shadow: inset 1px 1px 0 #fff;
`;

const RulerLabel = styled.span`
  flex: none;
  width: 40px;
  font-size: 10px;
  letter-spacing: -0.2px;
`;

const FirstFrame = styled.span`
  position: absolute;
  left: 4px;
  top: 2px;
  width: 9px;
  height: 23px;
  padding-top: 4px;
  border: 1px solid #c00;
  background: #f99;
  font-size: 9px;
  line-height: 12px;
`;

const FrameRows = styled.div`
  position: relative;
  flex: none;
  height: 73px;
  margin-left: 4px;
  border-left: 1px solid #000;
  background: #fff;
`;

const FrameRow = styled.div`
  height: 18px;
  border-bottom: 1px solid #ddd;
  background:
    repeating-linear-gradient(90deg, transparent 0 32px, #ddd 32px 40px),
    repeating-linear-gradient(90deg, #fff 0 7px, #ddd 7px 8px);
`;

const KeyFrame = styled.div`
  width: 8px;
  height: 18px;
  border: solid #000;
  border-width: 0 1px 1px 0;
  background: #fff;
`;

const PlayLine = styled.div`
  position: absolute;
  left: 3px;
  top: -1px;
  width: 1px;
  height: 74px;
  background: #c00;
`;

const FrameTools = styled.div`
  display: flex;
  flex: none;
  align-items: center;
  height: 17px;
  padding-left: 5px;
  border-top: 1px solid #eee;
`;

const Status = styled.div<{ $w: number }>`
  flex: none;
  width: ${p => p.$w}px;
  height: 16px;
  margin-right: 2px;
  border: solid #666;
  border-width: 1px 0 0 1px;
  box-shadow: 1px 1px 0 #fff;
  line-height: 15px;
  text-align: center;
`;

const TimeScroll = styled.div`
  display: flex;
  flex: 1;
  height: 16px;
  border: solid #000;
  border-width: 1px 0 1px 1px;
`;

const Side = styled.div`
  display: flex;
  flex: 1;
  flex-direction: column;
`;

const SideHead = styled.div`
  display: flex;
  justify-content: center;
  height: 26px;
  padding-top: 7px;
  border-bottom: 1px solid #555;
`;

const SideScroll = styled.div`
  display: flex;
  height: 75px;
  border: solid #000;
  border-width: 0 0 1px 1px;
`;

const SideEnd = styled.div`
  width: 1px;
  height: 15px;
  background: #000;
`;

const WorkArea = styled.div`
  display: flex;
  flex: 1;
  margin: 0 -1px;
  border: 3px solid #000;
`;

const WorkMain = styled.div`
  display: flex;
  flex: 1;
  flex-direction: column;
`;

const StagePane = styled.div`
  flex: 1;
  padding: 66px 0 0 99px;
`;

const Stage = styled.div`
  width: 321px;
  height: 191px;
  border: 1px solid #000;
  background: #666;
`;

const StageScroll = styled.div`
  display: flex;
  height: 15px;
  border-top: 1px solid #000;
`;

const StageVScroll = styled.div`
  display: flex;
  flex-direction: column;
  width: 15px;
  border-left: 1px solid #000;

  > :first-child { border-bottom: 1px solid #000; height: 15px; }
`;

const DocFoot = styled.div`
  display: flex;
  flex: none;
  height: 19px;
  padding: 1px 0 0 2px;
  gap: 3px;
`;

const ZoomDrop = styled.div`
  display: flex;
  align-items: center;
  justify-content: flex-end;
  width: 12px;
  height: 16px;
  border: 1px solid #000;
  background: #eee;
`;

const rulerMarks = Array.from({ length: 20 }, (_, i) => (i + 1) * 5);

const DocumentWindow = () => (
  <Document>
    <DocTitle>
      <DocBox />
      <Stripes $w={453} />
      <DocName>Untitled 1:1</DocName>
      <Stripes />
      <ZoomBox />
      <ShadeBox />
    </DocTitle>
    <DocBody>
      <SceneBar>
        <Icon name="clapper" />
        <Text $bold $ls={-0.7}>Scene 1</Text>
        <Spacer />
        <Button $w={22} $h={22}><Icon name="clapperBlue" /><ButtonCorner><Corner /></ButtonCorner></Button>
        <Button $w={21} $h={22}><Icon name="symbols" /><ButtonCorner><Corner /></ButtonCorner></Button>
      </SceneBar>
      <Timeline>
        <Layers>
          <LayersHead>
            <Icon name="eye" />
            <Icon name="lock" />
            <OutlineBox />
          </LayersHead>
          <LayerRow>
            <Icon name="layer" />
            <Spacer $w={4} />
            <Text $white $top={0}>Layer 1</Text>
            <Spacer />
            <Icon name="layerPencil" />
            <Spacer $w={14} />
            <Dot />
            <Dot $last />
            <LayerColor />
          </LayerRow>
          <LayersFoot>
            <Icon name="addLayer" />
            <Icon name="addGuide" />
            <Spacer />
            <Icon name="trash" />
          </LayersFoot>
        </Layers>
        <Frames>
          <Ruler>
            {rulerMarks.map(n => <RulerLabel key={n}>{n}</RulerLabel>)}
            <FirstFrame>1</FirstFrame>
          </Ruler>
          <FrameRows>
            <FrameRow>
              <KeyFrame />
            </FrameRow>
            <PlayLine />
          </FrameRows>
          <FrameTools>
            <Button $w={16} $h={15}><Icon name="playhead" /></Button>
            <Spacer $w={5} />
            <Button $w={15} $h={15}><Icon name="onion" /></Button>
            <Button $w={15} $h={15}><Icon name="onionLines" /></Button>
            <Spacer $w={5} />
            <Button $w={15} $h={15}><Icon name="onionMulti" /></Button>
            <Spacer $w={5} />
            <Button $w={15} $h={15}><Icon name="markers" /></Button>
            <Spacer $w={3} />
            <Status $w={33}>1</Status>
            <Status $w={48}>12.0 fps</Status>
            <Status $w={41}>0.0s</Status>
            <TimeScroll>
              <ScrollCell><Triangle dir="left" /></ScrollCell>
              <Thumb />
              <Track />
              <ScrollCell><Triangle dir="right" /></ScrollCell>
            </TimeScroll>
          </FrameTools>
        </Frames>
        <Side>
          <SideHead><Icon name="frameView" /></SideHead>
          <SideScroll><OffScroll w={15} /></SideScroll>
          <SideEnd />
        </Side>
      </Timeline>
      <WorkArea>
        <WorkMain>
          <StagePane>
            <Stage />
          </StagePane>
          <StageScroll>
            <ScrollCell><Triangle dir="left" /></ScrollCell>
            <Track />
          </StageScroll>
        </WorkMain>
        <StageVScroll>
          <ScrollCell><Triangle dir="up" /></ScrollCell>
          <Track />
        </StageVScroll>
      </WorkArea>
      <DocFoot>
        <Input $w={69}>100%</Input>
        <ZoomDrop><Triangle dir="down" /></ZoomDrop>
      </DocFoot>
    </DocBody>
  </Document>
);

/* ---------- tools ---------- */

const ToolPanel = styled.div`
  display: flex;
  flex: 1;
  flex-direction: column;
  gap: 3px;
  padding: 2px;
  background: #888;
`;

const Section = styled.div<{ $h?: number }>`
  display: flex;
  flex: ${p => (p.$h ? 'none' : '1')};
  flex-direction: column;
  height: ${p => (p.$h ? `${p.$h}px` : 'auto')};
  border-radius: 2px;
  background: #ddd;
  box-shadow: inset 1px 1px 0 #eee;
`;

const SectionTitle = styled.div<{ $h: number }>`
  flex: none;
  height: ${p => p.$h}px;
  padding: ${p => p.$h - 11}px 3px 0 0;
  border-bottom: 1px solid #999;
  line-height: 10px;
  text-align: center;
`;

const ToolGrid = styled.div<{ $rowH: number }>`
  display: grid;
  grid-template-columns: 26px 26px;
  grid-auto-rows: ${p => p.$rowH}px;
  place-items: center;
  padding: 2px 0 0 2px;
`;

const tools = [
  'arrow', 'subselect', 'line', 'lasso', 'pen', 'letterA', 'oval', 'rect',
  'pencil', 'brush', 'ink', 'bucket', 'dropper', 'eraser',
];

const ToolCell = styled.div<{ $on?: boolean }>`
  display: flex;
  align-items: center;
  justify-content: center;
  width: 24px;
  height: 24px;
  border: 1px solid transparent;
  border-radius: 3px;
  ${p => p.$on && 'background: #fff; border-color: #666 #fff #fff #666;'}
`;

const ToolsWindow = () => (
  <Window x={13} y={196} w={68} h={474} grip={false}>
    <ToolPanel>
      <Section $h={200}>
        <SectionTitle $h={16}>Tools</SectionTitle>
        <ToolGrid $rowH={26}>
          {tools.map((name, i) => (
            <ToolCell key={name} $on={i === 0}><Icon name={name} /></ToolCell>
          ))}
        </ToolGrid>
      </Section>
      <Section $h={44}>
        <SectionTitle $h={13}>View</SectionTitle>
        <ToolGrid $rowH={29}>
          <Icon name="hand" />
          <Icon name="magnifier" />
        </ToolGrid>
      </Section>
      <Section $h={80}>
        <SectionTitle $h={12}>Colors</SectionTitle>
        <Row $pad="5px 0 0 3px"><ColorPicker /></Row>
      </Section>
      <Section>
        <SectionTitle $h={13}>Options</SectionTitle>
        <Row $pad="3px 0 0 4px"><Button $w={24} $h={22} $on><Icon name="magnet" /></Button></Row>
        <Row $pad="3px 0 0 4px">
          <Button $w={24} $h={22}><Icon name="smooth" /></Button>
          <Button $w={24} $h={22}><Icon name="straighten" /></Button>
        </Row>
        <Row $pad="3px 0 0 4px">
          <Button $w={24} $h={22}><Icon name="rotate" /></Button>
          <Button $w={24} $h={22}><Icon name="scale" /></Button>
        </Row>
      </Section>
    </ToolPanel>
  </Window>
);

/* ---------- object actions ---------- */

const ActionField = styled.div`
  flex: 1;
  height: 19px;
  margin: 0 4px 0 3px;
  border: 1px solid #999;
  border-color: #999 #fff #fff #999;
`;

const ActionArea = styled.div`
  display: flex;
  height: 319px;
  padding: 0 5px;
`;

const Splitter = styled.div`
  display: flex;
  flex: none;
  align-items: center;
  width: 12px;
  border: solid #000;
  border-width: 0 1px;
  box-shadow: inset 1px 0 0 #fff, inset -1px 0 0 #888;
`;

const SplitHandle = styled.div`
  display: flex;
  align-items: center;
  justify-content: flex-end;
  width: 8px;
  height: 32px;
  margin-left: 1px;
  border: 1px solid #888;
  background: #ccc;
  box-shadow: inset 1px 1px 0 #fff;
`;

const Code = styled.div`
  flex: 1;
  height: 301px;
  border-bottom: 1px solid #fff;
  border-right: 1px solid #fff;
  background: linear-gradient(#999, #999) 0 0 / 100% 1px no-repeat, linear-gradient(#999, #999) 0 286px / 100% 1px no-repeat,
    linear-gradient(#fff, #fff) 0 0 / 100% 286px no-repeat, #ddd;
`;

const TargetRow = styled.div`
  display: flex;
  justify-content: flex-end;
  margin-top: -11px;
  padding-right: 27px;
`;

const ObjectActions = () => (
  <Window x={467} y={207} w={320} h={387} title="Object Actions" ls={0.05}>
    <Tabs menu="on" items={[{ icon: 'actions', label: 'Object Actions', w: 89, on: true, gap: 5 }]} />
    <Row $gap={1} $h={26} $pad="1px 5px 0 6px">
      <Button $w={17} $h={18}><Icon name="plus" /></Button>
      <Button $w={17} $h={18}><Icon name="minus" /></Button>
      <ActionField />
      <Button $w={17} $h={18}><Triangle dir="down" gray /></Button>
      <Button $w={17} $h={18}><Triangle dir="up" gray /></Button>
    </Row>
    <ActionArea>
      <Splitter>
        <SplitHandle>
          <svg width="3" height="5"><path d="M3 0v5H2V4H1V3H0V2h1V1h1V0z" fill="#336" /></svg>
        </SplitHandle>
      </Splitter>
      <Code />
    </ActionArea>
    <TargetRow>
      <Icon name="target" />
    </TargetRow>
  </Window>
);

/* ---------- library ---------- */

const LibraryHead = styled.div`
  display: flex;
  flex: none;
  align-items: center;
  height: 16px;
  padding: 0 3px 0 5px;
  border-bottom: 1px solid #000;
  box-shadow: inset 1px 1px 0 #fff;
`;

const Divider = styled.div`
  width: 1px;
  height: 13px;
  background: #999;
`;

const Preview = styled.div`
  flex: none;
  height: 99px;
  border-bottom: 1px solid #000;
  background: repeating-linear-gradient(90deg, #bbb 0 1px, #ccc 1px 2px);
`;

const LibraryList = styled.div`
  display: flex;
  flex: 1;
  margin-top: 3px;
  border-top: 1px solid #000;
`;

const ListMain = styled.div`
  flex: 1;
  background: #fff;
`;

const ListHead = styled.div`
  height: 15px;
  padding: 2px 0 0 4px;
  border-bottom: 1px solid #000;
  background: #ddd;
  box-shadow: inset 0 1px 0 #aaa;
`;

const ListSide = styled.div`
  display: flex;
  flex-direction: column;
  width: 14px;
  border-left: 1px solid #000;
`;

const LibraryFoot = styled.div`
  display: flex;
  flex: none;
  align-items: center;
  height: 14px;
  padding: 0 13px 0 2px;
  border-top: 1px solid #000;
`;

const FootScroll = styled.div`
  display: flex;
  align-items: center;
  width: 63px;
  height: 13px;
  border: solid #000;
  border-width: 0 1px;
`;

const Library = () => (
  <Window x={800} y={22} w={159} h={283} title="Library – Untitled 1" ls={-0.5}>
    <LibraryHead>
      <Text $ls={0.15} $top={1}>Empty library</Text>
      <Spacer />
      <Divider />
      <Spacer $w={7} />
      <Text $ls={-0.2} $top={1}>Options</Text>
      <Spacer $w={6} />
      <Corner />
    </LibraryHead>
    <Preview />
    <LibraryList>
      <ListMain>
        <ListHead>Name</ListHead>
      </ListMain>
      <ListSide>
        <Button $w={13} $h={15}><Icon name="sort" /></Button>
        <Button $w={13} $h={14}><Icon name="wide" /></Button>
        <Button $w={13} $h={14}><Icon name="narrow" /></Button>
        <OffScroll w={13} />
      </ListSide>
    </LibraryList>
    <LibraryFoot>
      <Icon name="newSymbol" />
      <Spacer $w={4} />
      <Icon name="folder" />
      <Spacer $w={5} />
      <Icon name="infoGray" />
      <Spacer />
      <Icon name="trashGray" />
      <Spacer $w={3} />
      <FootScroll>
        <ScrollCell><Triangle dir="left" /></ScrollCell>
        <Thumb />
        <Track />
        <ScrollCell><Triangle dir="right" /></ScrollCell>
      </FootScroll>
    </LibraryFoot>
  </Window>
);

/* ---------- scene ---------- */

const SceneList = styled.div`
  display: flex;
  flex: 1;
  margin-top: 2px;
  border-top: 1px solid #999;
`;

const SceneMain = styled.div`
  display: flex;
  flex: 1;
  flex-direction: column;
  background: #fff;
`;

const SceneFoot = styled.div`
  display: flex;
  justify-content: flex-end;
  gap: 2px;
  height: 13px;
  margin-top: auto;
  padding-right: 1px;
  background: #eee;
`;

const SceneSide = styled.div`
  display: flex;
  width: 14px;
  height: 97px;
  border-left: 1px solid #000;
  border-top: 1px solid #000;
`;

const Scene = () => (
  <Window x={800} y={306} w={218} h={151} title="Scene" ls={0.1}>
    <Tabs
      items={[
        { icon: 'info', label: 'Info', w: 41, gap: 5, ls: -0.2 },
        { icon: 'clapperRed', label: 'Scene', w: 48, on: true, gap: 1, ls: -0.2 },
      ]}
    />
    <SceneList>
      <SceneMain>
        <Row $gap={7} $pad="2px 0 0 7px">
          <Icon name="clapper" />
          <Text>Scene 1</Text>
        </Row>
        <SceneFoot>
          <Button $w={17} $h={13}><Icon name="duplicate" /></Button>
          <Button $w={17} $h={13}><Icon name="plus" /></Button>
          <Button $w={18} $h={13}><Icon name="trash" /></Button>
        </SceneFoot>
      </SceneMain>
      <SceneSide><OffScroll w={13} /></SceneSide>
    </SceneList>
  </Window>
);

/* ---------- stroke ---------- */

const StrokeStyle = styled.div`
  display: flex;
  flex: none;
  align-items: center;
  width: 202px;
  height: 19px;
  margin: 4px 0 0 3px;
  padding-left: 1px;
  border: 1px solid #000;
  background: #fff;
  box-shadow: 1px 1px 0 #000, 2px 2px 0 #000;
`;

const StrokeLine = styled.div`
  flex: 1;
  height: 2px;
  background: #000;
`;

const StrokeCorner = styled.div`
  align-self: flex-end;
  margin: 0 1px 1px -4px;
`;

const StrokePreview = styled.div`
  width: 203px;
  height: 23px;
  margin: 24px 0 0 3px;
  border: 1px solid #000;
  border-color: #444 #fff #eee #444;
  background: linear-gradient(#000, #000) 3px 11px / 100% 1px no-repeat, #fff;
`;

const Stroke = () => (
  <Window x={800} y={458} w={218} h={151} title="Stroke" ls={0.1}>
    <Tabs
      menu="on"
      items={[
        { icon: 'bucketTab', label: 'Fill', w: 37, gap: 1 },
        { icon: 'strokeTab', label: 'Stroke', w: 52, on: true, gap: 1 },
      ]}
    />
    <StrokeStyle>
      <Text $top={0}>Solid</Text>
      <StrokeLine />
      <StrokeCorner><Corner /></StrokeCorner>
    </StrokeStyle>
    <Row $pad="5px 5px 0 0" $h={25}>
      <Spacer />
      <Icon name="updown" />
      <Spacer $w={16} />
      <Input $w={22}>1</Input>
      <Spacer $w={3} />
      <Button $w={10} $h={17}><SmallTriangle /></Button>
      <Spacer $w={9} />
      <Swatch color="#000" />
    </Row>
    <StrokePreview />
  </Window>
);

/* ---------- mixer ---------- */

const MixerBody = styled.div`
  display: flex;
  justify-content: space-between;
  height: 84px;
  padding: 4px 4px 0 4px;
`;

const Channels = styled.div`
  display: grid;
  grid-auto-rows: 19.6px;
`;

const Spectrum = styled.div`
  width: 189px;
  height: 26px;
  margin-left: 3px;
  border: solid #000;
  border-width: 1px 1px 1px 0;
  background:
    linear-gradient(#fff, #fff0 50%, #0000 50%, #000),
    linear-gradient(90deg, #f00, #ff0 17%, #0f0 34%, #0ff 50%, #00f 67%, #f0f 84%, #f00);
`;

const channels = [['R:', '0'], ['G:', '102'], ['B:', '204'], ['Alpha:', '100%']];

const Mixer = () => (
  <Window x={800} y={610} w={218} h={151} title="Mixer" ls={0.2}>
    <Tabs
      menu="on"
      items={[
        { icon: 'swatches', label: 'Swatches', w: 66, ls: -0.1, gap: 3 },
        { icon: 'palette', label: 'Mixer', w: 49, on: true, gap: 0 },
      ]}
    />
    <MixerBody>
      <ColorPicker />
      <Channels>
        {channels.map(([label, value]) => (
          <Row key={label} $h={17}>
            <Text $w={40} $right>{label}</Text>
            <Spacer $w={5} />
            <Input $w={36}>{value}</Input>
            <Spacer $w={3} />
            <Button $w={10} $h={16}><SmallTriangle /></Button>
          </Row>
        ))}
      </Channels>
    </MixerBody>
    <Spectrum />
  </Window>
);

/* ---------- bottom panels ---------- */

const FramePanel = () => (
  <Window x={89} y={610} w={218} h={151} title="Frame" ls={0.1}>
    <Tabs
      menu="off"
      items={[
        { icon: 'frame', label: 'Frame', w: 51, on: true, gap: 3 },
        { icon: 'sound', label: 'Sound', w: 48, gap: 1, ls: -0.3 },
      ]}
    />
    <Row $gap={5} $pad="4px 0 0 0">
      <Text $w={49} $right>Label:</Text>
      <Input $w={153} />
    </Row>
    <Row $gap={4} $pad="2px 0 0 0">
      <Text $w={49} $right $ls={-0.05} $top={0}>Tweening:</Text>
      <Select $w={106}>None<Triangle dir="down" gray /></Select>
    </Row>
  </Window>
);

const EmptyBox = styled.div`
  width: 14px;
  height: 14px;
  border: 1px solid #999;
`;

const Rule = styled.div`
  width: 204px;
  height: 2px;
  margin: 5px 0 0 3px;
  border-top: 1px solid #aaa;
  background: #fff;
`;

const InstancePanel = () => (
  <Window x={308} y={610} w={272} h={151} title="Instance" ls={0.1}>
    <Tabs
      menu="off"
      items={[
        { icon: 'instance', label: 'Instance', w: 59, on: true, ls: -0.4 },
        { icon: 'effect', label: 'Effect', w: 49, gap: 2, ls: -0.1 },
        { icon: 'transform', label: 'Transform', w: 63, ls: 0.2 },
        { icon: 'align', label: 'Align', w: 52, gap: 7 },
      ]}
    />
    <Row $gap={5} $pad="2px 0 0 38px">
      <EmptyBox />
      <Text $ls={1.7} $top={0}>---</Text>
    </Row>
    <Row $gap={4} $pad="5px 0 0 0">
      <Text $w={53} $right $top={0}>Behavior:</Text>
      <Select $w={149}><span /><Triangle dir="down" gray /></Select>
    </Row>
    <Rule />
    <Spacer />
    <Row $gap={1} $pad="0 0 3px 97px">
      <Button $w={23} $h={17}><Icon name="swapSymbol" /></Button>
      <Button $w={23} $h={17}><Icon name="editSymbol" /></Button>
      <Button $w={23} $h={17}><Icon name="dupSymbol" /></Button>
      <Button $w={23} $h={17}><Icon name="actionsGray" /></Button>
    </Row>
  </Window>
);

const TextPanel = () => (
  <Window x={581} y={610} w={218} h={151} title="Text Options" ls={0.05}>
    <Tabs
      menu="off"
      items={[
        { icon: 'textA', label: 'Character', w: 45 },
        { icon: 'paragraph', label: 'Paragraph', w: 44, gap: 4 },
        { icon: 'textOptions', label: 'Text Options', w: 82, on: true, gap: 1 },
      ]}
    />
    <Row $pad="5px 0 0 3px">
      <Select $w={202}>Static Text<Triangle dir="down" /></Select>
    </Row>
    <Row $gap={4} $pad="7px 0 0 5px"><Checkbox /><Text $ls={-0.1}>Use Device Fonts</Text></Row>
    <Row $gap={4} $pad="4px 0 0 5px"><Checkbox /><Text $ls={-0.1}>Selectable</Text></Row>
  </Window>
);

const App = () => (
  <>
    <GlobalStyle />
    <DocumentWindow />
    <MenuBar>
      <AppleLogo />
      <Spacer $w={13} />
      {menus.map(([label, w, ls]) => (
        <Text key={label} $bold $top={0} $w={w} $ls={ls}>{label}</Text>
      ))}
    </MenuBar>
    <ToolsWindow />
    <ObjectActions />
    <Library />
    <Scene />
    <Stroke />
    <FramePanel />
    <InstancePanel />
    <TextPanel />
    <Mixer />
  </>
);

export default App;
